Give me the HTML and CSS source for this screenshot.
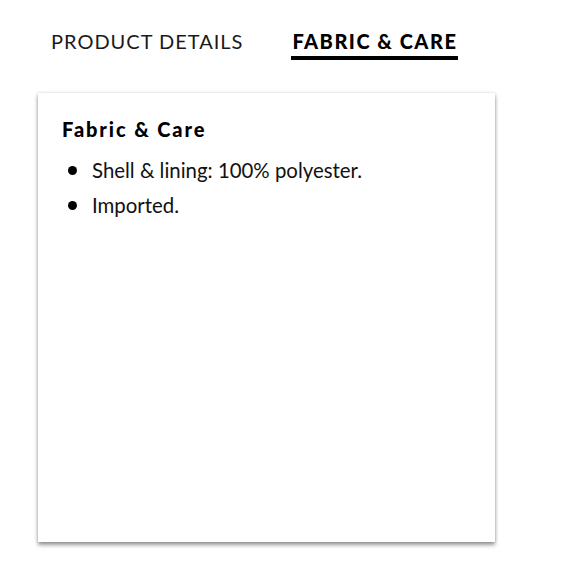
FILE: index.html
```html
<!DOCTYPE html>
<html>
<head>
<meta charset="utf-8">
<link rel="stylesheet" href="styles.css">
</head>
<body>
<div class="page">
  <div class="tabs">
    <div class="tab">PRODUCT DETAILS</div>
    <div class="tab active">FABRIC &amp; CARE</div>
  </div>
  <div class="card">
    <h2 class="card-title">Fabric &amp; Care</h2>
    <ul class="list">
      <li>Shell &amp; lining: 100% polyester.</li>
      <li>Imported.</li>
    </ul>
  </div>
</div>
</body>
</html>
```
FILE: styles.css
```css
* { box-sizing: border-box; }
html, body { margin: 0; padding: 0; background: #fff; }
body { font-family: Lato, "Noto Sans", sans-serif; color: #111; }
.page { padding: 28px 0 38px 38px; min-height: 580px; }
.tabs { display: flex; gap: 48px; padding-left: 13px; height: 65px; }
.tab { font-size: 20px; letter-spacing: 1px; line-height: 26px; height: 32px; font-weight: 400; color: #1a1a1a; }
.tab.active { font-weight: 900; color: #000; border-bottom: 4px solid #000; padding: 0 1px; letter-spacing: 1.5px; }
.card { width: 457px; height: 449px; background: #fff; box-shadow: 0 3px 4px rgba(0,0,0,0.4), 0 0 3px rgba(0,0,0,0.15); padding: 26px 24px; }
.card-title { margin: 0; font-size: 20px; font-weight: 900; letter-spacing: 1.9px; line-height: 20px; color: #000; }
.list { list-style: none; margin: 14px 0 0; padding: 0; font-size: 20.4px; line-height: 35px; font-weight: 400; }
.list li { display: flex; align-items: center; gap: 15px; padding-left: 6px; }
.list li::before { content: ""; width: 9px; height: 9px; border-radius: 50%; background: #000; flex: none; }
```
